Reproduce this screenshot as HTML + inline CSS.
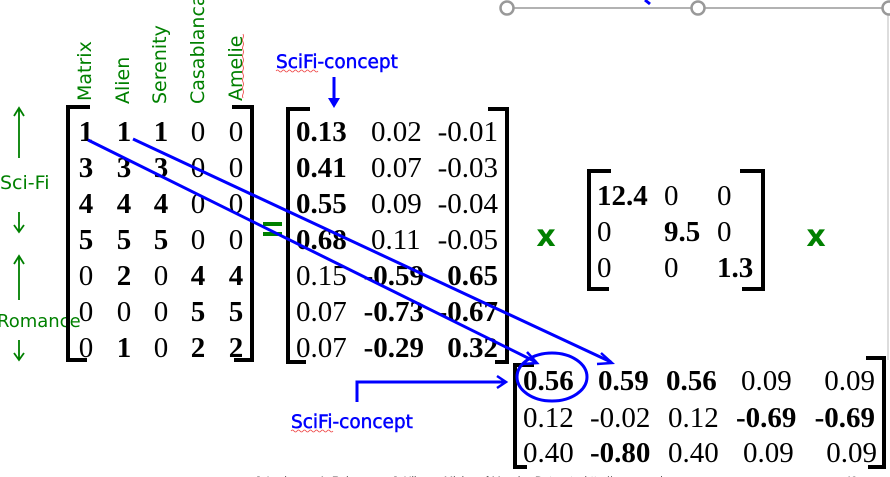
<!DOCTYPE html>
<html><head><meta charset="utf-8"><style>
html,body{margin:0;padding:0;background:#fff;width:890px;height:477px;overflow:hidden}
svg{display:block}
.m{font-family:"Liberation Serif",serif;font-size:29px;fill:#000}
.b{font-weight:bold}
.g{font-family:"DejaVu Sans","Liberation Sans",sans-serif;font-size:19px;fill:#008000}
.bl{font-family:"DejaVu Sans","Liberation Sans",sans-serif;font-size:18.5px;fill:#0000ff;stroke:#0000ff;stroke-width:0.5}
</style></head><body>
<svg width="890" height="477" viewBox="0 0 890 477" xmlns="http://www.w3.org/2000/svg">
<line x1="507" y1="8" x2="890" y2="8" stroke="#999" stroke-width="1.5"/>
<line x1="888" y1="8" x2="888" y2="360" stroke="#bbb" stroke-width="1"/>
<circle cx="507" cy="8" r="6.5" fill="#fff" stroke="#999" stroke-width="2.5"/>
<circle cx="698" cy="8" r="6.5" fill="#fff" stroke="#999" stroke-width="2.5"/>
<circle cx="889" cy="8" r="6.5" fill="#fff" stroke="#999" stroke-width="2.5"/>
<path d="M645 0 L650 4" stroke="#00f" stroke-width="3"/>

<g class="g">
<text transform="translate(91,101) rotate(-90)">Matrix</text>
<text transform="translate(129,104) rotate(-90)">Alien</text>
<text transform="translate(166,104) rotate(-90)">Serenity</text>
<text transform="translate(204,104) rotate(-90)">Casablanca</text>
<text transform="translate(242,101) rotate(-90)">Amelie</text>
</g>
<path d="M243 34 q1 2 0 4 q-1 2 0 4 q1 2 0 4 q-1 2 0 4 q1 2 0 4 q-1 2 0 4 q1 2 0 4 q-1 2 0 4 q1 2 0 4 q-1 2 0 4 q1 2 0 4 q-1 2 0 4 q1 2 0 4 q-1 2 0 4 q1 2 0 4 q-1 2 0 4" stroke="#e44" fill="none" stroke-width="0.8"/>

<g stroke="#008000" stroke-width="1.8" fill="none">
<path d="M19 158 V108 M14 116 L19 108 L24 116"/>
<path d="M19 212 V232 M14 225 L19 232 L24 225"/>
<path d="M19 300 V256 M14 264 L19 256 L24 264"/>
<path d="M19 340 V360 M14 353 L19 360 L24 353"/>
</g>
<text class="g" x="0" y="189">Sci-Fi</text>
<text class="g" x="-3" y="327" style="font-size:18px">Romance</text>

<g fill="none" stroke="#000" stroke-width="4">
<path d="M90 107 H68 V360 H87"/>
<path d="M232 107 H252 V360 H234"/>
<path d="M310 109 H288 V362 H306"/>
<path d="M488 109 H507 V362 H495"/>
<path d="M611 171 H589 V289 H609"/>
<path d="M740 171 H763 V289 H742"/>
<path d="M534 365 H515 V467 H527"/>
<path d="M866 358 H884 V467 H868"/>
</g>
<g class="m" text-anchor="middle">
<text x="86" y="141" class="b">1</text><text x="124" y="141" class="b">1</text><text x="161" y="141" class="b">1</text><text x="198" y="141">0</text><text x="236" y="141">0</text>
<text x="86" y="177" class="b">3</text><text x="124" y="177" class="b">3</text><text x="161" y="177" class="b">3</text><text x="198" y="177">0</text><text x="236" y="177">0</text>
<text x="86" y="213" class="b">4</text><text x="124" y="213" class="b">4</text><text x="161" y="213" class="b">4</text><text x="198" y="213">0</text><text x="236" y="213">0</text>
<text x="86" y="249" class="b">5</text><text x="124" y="249" class="b">5</text><text x="161" y="249" class="b">5</text><text x="198" y="249">0</text><text x="236" y="249">0</text>
<text x="86" y="285">0</text><text x="124" y="285" class="b">2</text><text x="161" y="285">0</text><text x="198" y="285" class="b">4</text><text x="236" y="285" class="b">4</text>
<text x="86" y="321">0</text><text x="124" y="321">0</text><text x="161" y="321">0</text><text x="198" y="321" class="b">5</text><text x="236" y="321" class="b">5</text>
<text x="86" y="357">0</text><text x="124" y="357" class="b">1</text><text x="161" y="357">0</text><text x="198" y="357" class="b">2</text><text x="236" y="357" class="b">2</text>
</g>

<rect x="263" y="222" width="19" height="4" fill="#008000"/>
<rect x="263" y="232" width="19" height="4" fill="#008000"/>

<g class="m">
<text x="296" y="141" class="b">0.13</text><text x="371" y="141">0.02</text><text x="498" y="141" text-anchor="end">-0.01</text>
<text x="296" y="177" class="b">0.41</text><text x="371" y="177">0.07</text><text x="498" y="177" text-anchor="end">-0.03</text>
<text x="296" y="213" class="b">0.55</text><text x="371" y="213">0.09</text><text x="498" y="213" text-anchor="end">-0.04</text>
<text x="296" y="249" class="b">0.68</text><text x="371" y="249">0.11</text><text x="498" y="249" text-anchor="end">-0.05</text>
<text x="296" y="285">0.15</text><text x="424" y="285" class="b" text-anchor="end">-0.59</text><text x="498" y="285" class="b" text-anchor="end">0.65</text>
<text x="296" y="321">0.07</text><text x="424" y="321" class="b" text-anchor="end">-0.73</text><text x="498" y="321" class="b" text-anchor="end">-0.67</text>
<text x="296" y="357">0.07</text><text x="424" y="357" class="b" text-anchor="end">-0.29</text><text x="498" y="357" class="b" text-anchor="end">0.32</text>
</g>

<text x="546" y="246" text-anchor="middle" font-family="DejaVu Sans,sans-serif" font-weight="bold" font-size="30" fill="#008000">x</text>
<text x="816" y="246" text-anchor="middle" font-family="DejaVu Sans,sans-serif" font-weight="bold" font-size="30" fill="#008000">x</text>

<g class="m">
<text x="597" y="205" class="b">12.4</text><text x="664" y="205">0</text><text x="717" y="205">0</text>
<text x="597" y="241">0</text><text x="664" y="241" class="b">9.5</text><text x="717" y="241">0</text>
<text x="597" y="277">0</text><text x="664" y="277">0</text><text x="717" y="277" class="b">1.3</text>
</g>

<g class="m">
<text x="523" y="390" class="b">0.56</text><text x="598" y="390" class="b">0.59</text><text x="666" y="390" class="b">0.56</text><text x="741" y="390">0.09</text><text x="875" y="390" text-anchor="end">0.09</text>
<text x="523" y="427">0.12</text><text x="590" y="427">-0.02</text><text x="668" y="427">0.12</text><text x="736" y="427" class="b">-0.69</text><text x="875" y="427" class="b" text-anchor="end">-0.69</text>
<text x="523" y="462">0.40</text><text x="590" y="462" class="b">-0.80</text><text x="668" y="462">0.40</text><text x="743" y="462">0.09</text><text x="877" y="462" text-anchor="end">0.09</text>
</g>

<g stroke="#0000ff" stroke-width="3" fill="none">
<path d="M88 140 L536 362"/>
<path d="M133 139 L611 362"/>
<path d="M527 352 L537 363 L523 364" stroke-width="2.5"/>
<path d="M601 353 L612 363 L597 364" stroke-width="2.5"/>
<ellipse cx="552" cy="377" rx="35" ry="24"/>
<path d="M357 402 V382 H505"/>
<path d="M497 376 L506 382 L497 388" stroke-width="2.5"/>
<path d="M334 77 V100"/>
</g>
<path d="M328 98 L334 108 L340 98 Z" fill="#0000ff"/>
<text class="bl" x="276" y="68">SciFi-concept</text>
<path d="M276 71 q1.5 -2 3 0 q1.5 2 3 0 q1.5 -2 3 0 q1.5 2 3 0 q1.5 -2 3 0 q1.5 2 3 0 q1.5 -2 3 0 q1.5 2 3 0 q1.5 -2 3 0 q1.5 2 3 0 q1.5 -2 3 0 q1.5 2 3 0 q1.5 -2 3 0 q1.5 2 3 0" stroke="#e44" fill="none" stroke-width="0.8"/>
<text class="bl" x="291" y="428">SciFi-concept</text>
<path d="M291 431 q1.5 -2 3 0 q1.5 2 3 0 q1.5 -2 3 0 q1.5 2 3 0 q1.5 -2 3 0 q1.5 2 3 0 q1.5 -2 3 0 q1.5 2 3 0 q1.5 -2 3 0 q1.5 2 3 0 q1.5 -2 3 0 q1.5 2 3 0 q1.5 -2 3 0 q1.5 2 3 0" stroke="#e44" fill="none" stroke-width="0.8"/>

<text x="255" y="484" font-family="Liberation Sans,sans-serif" font-size="11" fill="#555">J. Leskovec, A. Rajaraman, J. Ullman: Mining of Massive Datasets, http://www.mmds.org</text>
<text x="845" y="484" font-family="Liberation Sans,sans-serif" font-size="11" fill="#555">40</text>
</svg>
</body></html>
